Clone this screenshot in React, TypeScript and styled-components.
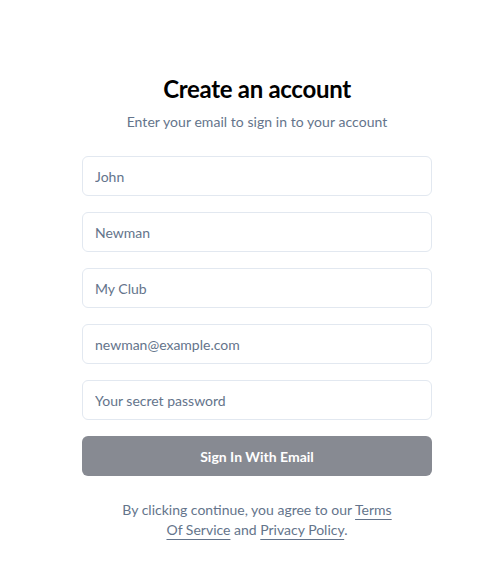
import React from "react";
import styled, { createGlobalStyle } from "styled-components";

const Global = createGlobalStyle`
  * { box-sizing: border-box; }
  body {
    margin: 0;
    background: #ffffff;
    font-family: Lato, "Noto Sans", sans-serif;
    color: #0f172a;
  }
`;

const Page = styled.div`
  display: flex;
  justify-content: flex-start;
  padding: 73px 0 0 82px;
`;

const Card = styled.div`
  width: 350px;
  display: flex;
  flex-direction: column;
`;

const Header = styled.div`
  display: flex;
  flex-direction: column;
  align-items: center;
  gap: 7px;
  margin-bottom: 24px;
`;

const Title = styled.h1`
  margin: 0;
  font-size: 24px;
  line-height: 32px;
  font-weight: 700;
  letter-spacing: -0.3px;
  color: #000;
`;

const Subtitle = styled.p`
  margin: 0;
  font-size: 14px;
  line-height: 20px;
  letter-spacing: 0.05px;
  color: #64748b;
`;

const Form = styled.form`
  display: flex;
  flex-direction: column;
  gap: 16px;
`;

const Input = styled.input`
  height: 40px;
  width: 100%;
  border: 1px solid #e2e8f0;
  border-radius: 6px;
  padding: 0 12px;
  font-family: inherit;
  font-size: 14px;
  color: #0f172a;
  background: #fff;
  outline: none;
  &::placeholder { color: #64748b; }
`;

const Button = styled.button`
  height: 40px;
  width: 100%;
  border: none;
  border-radius: 6px;
  background: #878a92;
  color: #fff;
  font-family: inherit;
  font-size: 14px;
  font-weight: 700;
`;

const Footer = styled.p`
  margin: 24px 0 0;
  padding: 0 32px;
  text-align: center;
  font-size: 14px;
  line-height: 20px;
  color: #64748b;
`;

const Link = styled.a`
  color: #64748b;
  text-decoration: underline;
  text-underline-offset: 4px;
`;

export default function App() {
  return (
    <>
      <Global />
      <Page>
        <Card>
          <Header>
            <Title>Create an account</Title>
            <Subtitle>Enter your email to sign in to your account</Subtitle>
          </Header>
          <Form onSubmit={(e) => e.preventDefault()}>
            <Input placeholder="John" />
            <Input placeholder="Newman" />
            <Input placeholder="My Club" />
            <Input placeholder="newman@example.com" />
            <Input placeholder="Your secret password" type="password" />
            <Button type="submit">Sign In With Email</Button>
          </Form>
          <Footer>
            By clicking continue, you agree to our <Link>Terms Of Service</Link> and{" "}
            <Link>Privacy Policy</Link>.
          </Footer>
        </Card>
      </Page>
    </>
  );
}
